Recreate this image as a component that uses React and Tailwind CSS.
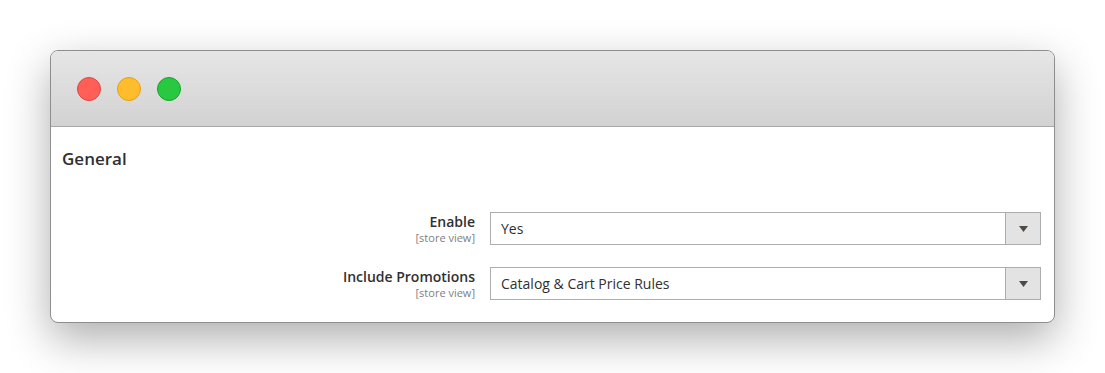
import React from "react";

function Select({ value }) {
  return (
    <div className="flex h-[33px] flex-1 border border-[#adadad] bg-white">
      <div className="flex flex-1 items-center pl-[10px] text-[14px] text-[#303030]">{value}</div>
      <div className="flex w-[35px] items-center justify-center border-l border-[#adadad] bg-[#e3e3e3]">
        <svg width="9" height="6" viewBox="0 0 9 6">
          <path d="M0 0 H9 L4.5 6 Z" fill="#514943" />
        </svg>
      </div>
    </div>
  );
}

function Row({ label, value }) {
  return (
    <div className="flex items-start">
      <div className="flex w-[413px] flex-col items-end pt-[1px]">
        <div className="text-[14px] font-semibold leading-[18px] text-[#303030]">{label}</div>
        <div className="text-[11px] leading-[14px] text-[#808080]">[store view]</div>
      </div>
      <div className="ml-[15px] flex flex-1">
        <Select value={value} />
      </div>
    </div>
  );
}

export default function App() {
  return (
    <div
      className="h-[373px] w-[1105px] bg-white pl-[50px] pt-[50px]"
      style={{ fontFamily: '"Open Sans", "Liberation Sans", sans-serif' }}
    >
      <div className="flex h-[273px] w-[1005px] flex-col overflow-hidden rounded-[8px] border border-[#8e8e8e] bg-white shadow-[0_16px_44px_rgba(0,0,0,0.32)]">
        <div className="flex h-[76px] items-center gap-[16px] border-b border-[#a8a8a8] bg-gradient-to-b from-[#e6e6e6] to-[#d2d2d2] pl-[26px]">
          <div className="h-[24px] w-[24px] rounded-full border border-[#e2463f] bg-[#ff5f57]" />
          <div className="h-[24px] w-[24px] rounded-full border border-[#e1a116] bg-[#ffbd2e]" />
          <div className="h-[24px] w-[24px] rounded-full border border-[#13a42b] bg-[#28c940]" />
        </div>
        <div className="flex flex-col pl-[11px] pr-[13px]">
          <div className="mt-[20px] text-[17px] font-semibold leading-[24px] text-[#303030]">General</div>
          <div className="mt-[41px] flex flex-col gap-[22px]">
            <Row label="Enable" value="Yes" />
            <Row label="Include Promotions" value="Catalog & Cart Price Rules" />
          </div>
        </div>
      </div>
    </div>
  );
}
